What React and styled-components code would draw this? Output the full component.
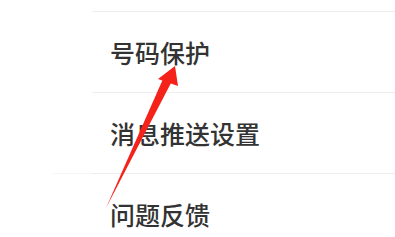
import React from 'react'
import styled, { createGlobalStyle } from 'styled-components'

const GlobalStyle = createGlobalStyle`
	html, body {
		margin: 0;
		padding: 0;
		background: #ffffff;
	}
	body {
		font-family: "Noto Sans CJK SC", "Noto Sans", sans-serif;
	}
`

const Page = styled.div`
	position: relative;
	width: 395px;
	height: 237px;
	overflow: hidden;
	padding-top: 11px;
	box-sizing: border-box;
`

const Divider = styled.div`
	height: 1px;
	margin-left: ${(p) => (p.$wide ? '53px' : '92px')};
	background: ${(p) =>
		p.$wide
			? 'linear-gradient(to right, #f6f6f6 0 39px, #ededed 39px)'
			: '#ededed'};
`

const Row = styled.div`
	display: flex;
	align-items: center;
	height: 80px;
	margin-left: 92px;
	padding-left: 18px;
	font-size: 25px;
	font-weight: 500;
	color: #333333;
	letter-spacing: 0;
`

const Arrow = styled.svg`
	position: absolute;
	left: 0;
	top: 0;
	pointer-events: none;
`

const items = ['号码保护', '消息推送设置', '问题反馈']

const App = () => {
	return (
		<Page>
			<GlobalStyle />
			{items.map((label, i) => (
				<React.Fragment key={label}>
					<Divider $wide={i === 2} />
					<Row>{label}</Row>
				</React.Fragment>
			))}

			<Arrow width='395' height='237' viewBox='0 0 395 237'>
				<polygon points='106,208 163,79 171,83' fill='#f5221a' />
				<polygon points='175,66 158,79 178,86' fill='#f5221a' />
			</Arrow>
		</Page>
	)
}

export default App
